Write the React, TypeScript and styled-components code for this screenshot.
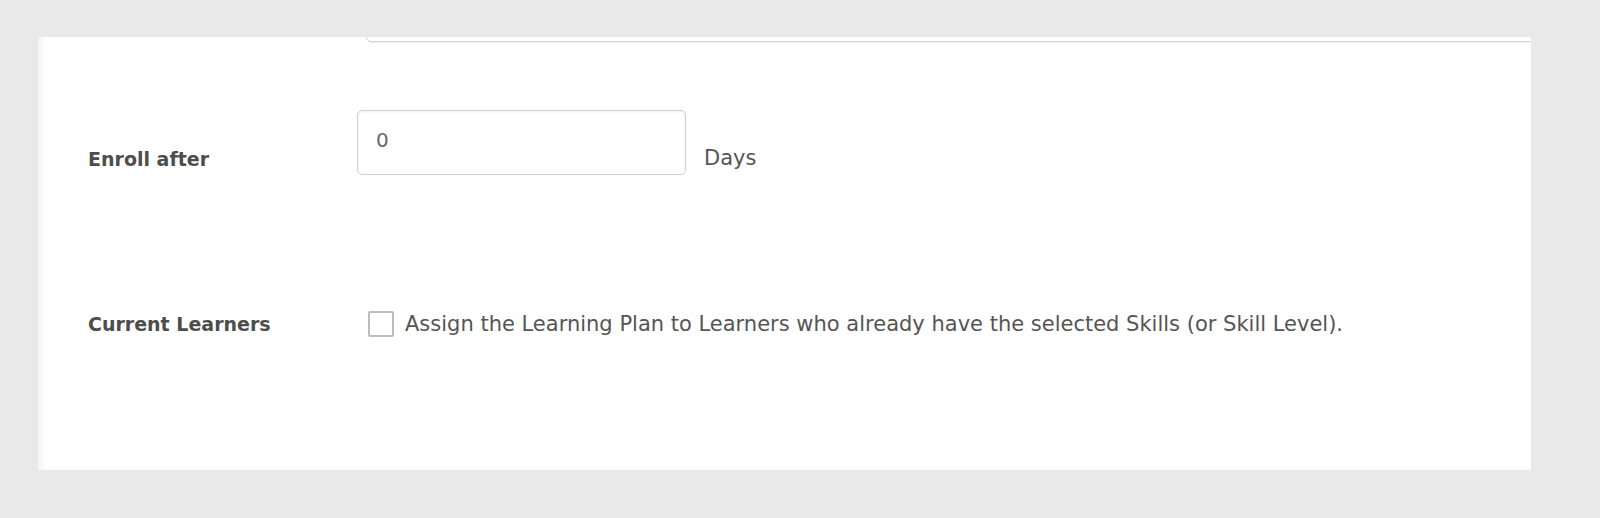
import React from 'react';
import styled, { createGlobalStyle } from 'styled-components';

const GlobalStyle = createGlobalStyle`
  html, body {
    margin: 0;
    padding: 0;
    background: #e9e9e9;
  }
  body {
    font-family: 'DejaVu Sans', 'Noto Sans', sans-serif;
  }
`;

const Page = styled.div`
  width: 1600px;
  height: 518px;
  padding: 37px 0 0 38px;
  box-sizing: border-box;
`;

const Panel = styled.div`
  width: 1493px;
  height: 433px;
  background: #fff;
  overflow: hidden;
  box-shadow: inset 10px 0 8px -8px rgba(0, 0, 0, 0.07);
`;

const PrevField = styled.div`
  height: 60px;
  margin: -57px -20px 0 328px;
  border: 1px solid #d4d4d4;
  border-radius: 5px;
  box-shadow: 0 1px 1px rgba(0, 0, 0, 0.06);
`;

const Form = styled.div`
  display: flex;
  flex-direction: column;
  padding: 68px 0 0 50px;
`;

const Row = styled.div<{ $align: string; $gap: number }>`
  display: flex;
  align-items: ${(p) => p.$align};
  margin-bottom: ${(p) => p.$gap}px;
`;

const Label = styled.div<{ $lift?: number }>`
  width: 269px;
  flex-shrink: 0;
  font-size: 19px;
  font-weight: 700;
  color: #4d4d4d;
  padding-bottom: ${(p) => p.$lift ?? 0}px;
`;

const NumberInput = styled.input`
  width: 329px;
  height: 65px;
  box-sizing: border-box;
  border: 1px solid #cfcfcf;
  border-radius: 5px;
  padding: 0 18px 6px;
  font-family: inherit;
  font-size: 20px;
  color: #666;
  box-shadow: inset 0 1px 3px rgba(0, 0, 0, 0.06);
  outline: none;
`;

const Unit = styled.span`
  margin-left: 18px;
  font-size: 21px;
  color: #555;
  line-height: 1;
  padding-bottom: 6px;
`;

const CheckLabel = styled.label`
  display: flex;
  align-items: center;
  margin-left: 11px;
  font-size: 21px;
  color: #555;
`;

const Box = styled.span`
  width: 22px;
  height: 22px;
  border: 2px solid #bcbcbc;
  border-radius: 2px;
  margin-right: 11px;
  flex-shrink: 0;
`;

export default function App() {
  return (
    <>
      <GlobalStyle />
      <Page>
        <Panel>
          <PrevField />
          <Form>
            <Row $align="flex-end" $gap={136}>
              <Label $lift={5}>Enroll after</Label>
              <NumberInput defaultValue="0" />
              <Unit>Days</Unit>
            </Row>
            <Row $align="center" $gap={0}>
              <Label>Current Learners</Label>
              <CheckLabel>
                <Box />
                Assign the Learning Plan to Learners who already have the selected Skills (or Skill Level).
              </CheckLabel>
            </Row>
          </Form>
        </Panel>
      </Page>
    </>
  );
}
